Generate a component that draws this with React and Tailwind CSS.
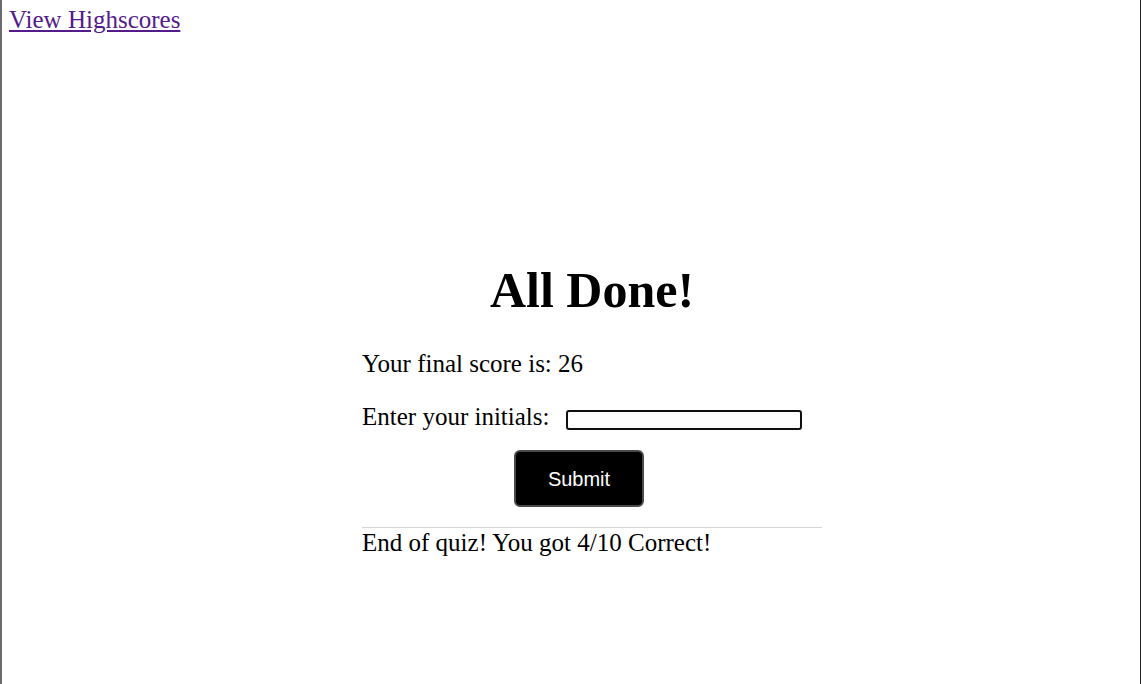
export default function App() {
  return (
    <div className="min-h-[684px] border-l-2 border-l-[#6b6b6b] border-r border-r-[#262626] bg-white font-['Liberation_Serif',serif] text-black">
      <header className="pl-[7px] pt-[6px]">
        <a href="#highscores" className="text-[25px] leading-[28px] text-[#551a8b] underline">
          View Highscores
        </a>
      </header>

      <main className="ml-[360px] mt-[227px] w-[460px]">
        <h1 className="text-center text-[50px] font-bold leading-[56px]">All Done!</h1>

        <p className="mt-[31px] text-[25px] leading-[30px]">Your final score is: 26</p>

        <div className="mt-[23px] flex items-center">
          <label htmlFor="initials" className="text-[25px] leading-[30px]">Enter your initials:</label>
          <input
            id="initials"
            type="text"
            className="ml-[17px] mt-[6px] h-[20px] w-[236px] rounded-[3px] border-2 border-[#111] bg-white"
          />
        </div>

        <div className="mt-[18px] flex pl-[152px]">
          <button className="h-[57px] w-[130px] rounded-[6px] border-2 border-[#4a4a4a] bg-black font-['Liberation_Sans',sans-serif] text-[20px] text-white">
            Submit
          </button>
        </div>

        <div className="mt-[20px] border-t border-[#d6d6d6] pt-[1px]">
          <p className="text-[25px] leading-[28px]">End of quiz! You got 4/10 Correct!</p>
        </div>
      </main>
    </div>
  );
}
